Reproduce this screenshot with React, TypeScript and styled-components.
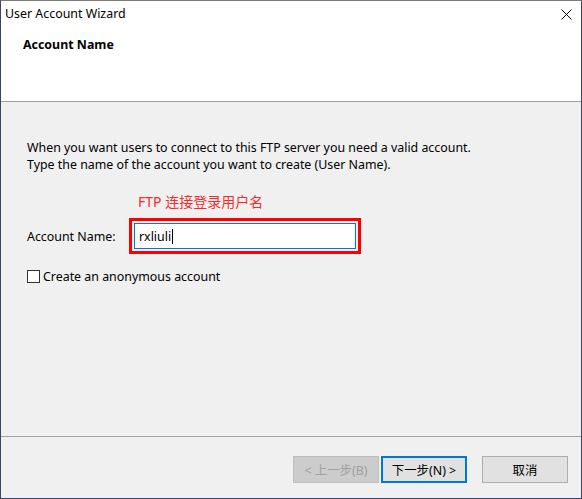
import React from "react";
import styled, { createGlobalStyle } from "styled-components";

const Global = createGlobalStyle`
  html, body { margin: 0; padding: 0; background: #f0f0f0; }
  body { font-family: "Segoe UI", "Noto Sans", "Noto Sans CJK SC", sans-serif; }
`;

const Window = styled.div`
  width: 582px;
  height: 499px;
  box-sizing: border-box;
  border: 1px solid #3a4466;
  border-top-color: #7a7a7a;
  background: #f0f0f0;
  display: flex;
  flex-direction: column;
  font-size: 12.4px;
  color: #000;
`;

const Header = styled.div`
  background: #fff;
  height: 101px;
  box-sizing: border-box;
  border-bottom: 1px solid #a0a0a0;
  display: flex;
  flex-direction: column;
`;

const TitleBar = styled.div`
  height: 24px;
  display: flex;
  align-items: center;
  justify-content: space-between;
  padding: 0 9px 0 4px;
`;

const Title = styled.span`
  font-size: 12.4px;
`;

const CloseIcon = styled.svg`
  width: 11px;
  height: 11px;
  margin-top: 2px;
`;

const PageTitle = styled.div`
  font-weight: bold;
  font-size: 12.4px;
  padding: 11px 0 0 22px;
`;

const Body = styled.div`
  flex: 1;
  display: flex;
  flex-direction: column;
  padding: 37px 0 0 26px;
`;

const Paragraph = styled.p`
  margin: 0;
  line-height: 17px;
`;

const Annotation = styled.div`
  color: #f52b2b;
  font-size: 14px;
  margin: 19px 0 0 111px;
  line-height: 19px;
`;

const FieldRow = styled.div`
  display: flex;
  align-items: center;
  margin-top: 7px;
`;

const Label = styled.span`
  width: 102px;
`;

const Highlight = styled.div`
  width: 232px;
  height: 36px;
  box-sizing: border-box;
  border: 3px solid #ff0000;
  padding: 2px;
`;

const TextBox = styled.div`
  height: 26px;
  box-sizing: border-box;
  border: 1px solid #0078d7;
  background: #fff;
  display: flex;
  align-items: center;
  padding-left: 4px;
`;

const Caret = styled.span`
  display: inline-block;
  width: 1px;
  height: 15px;
  background: #000;
  margin-left: 1px;
`;

const CheckRow = styled.label`
  display: flex;
  align-items: center;
  margin-top: 14px;
  gap: 3px;
`;

const Box = styled.span`
  width: 13px;
  height: 13px;
  box-sizing: border-box;
  border: 1px solid #333;
  background: #fff;
`;

const Footer = styled.div`
  height: 62px;
  box-sizing: border-box;
  border-top: 1px solid #a0a0a0;
  display: flex;
  justify-content: flex-end;
  align-items: flex-start;
  padding: 19px 13px 0 0;
`;

const Button = styled.div<{ $variant?: "disabled" | "default" | "normal" }>`
  width: 86px;
  height: 27px;
  box-sizing: border-box;
  display: flex;
  align-items: center;
  justify-content: center;
  font-size: 12.4px;
  background: ${(p) => (p.$variant === "disabled" ? "#cccccc" : "#e1e1e1")};
  color: ${(p) => (p.$variant === "disabled" ? "#a0a0a0" : "#000")};
  border: ${(p) =>
    p.$variant === "default"
      ? "2px solid #0078d7"
      : p.$variant === "disabled"
      ? "1px solid #bfbfbf"
      : "1px solid #adadad"};
  margin-left: ${(p) => (p.$variant === "normal" ? "15px" : "2px")};
`;

export default function App() {
  return (
    <>
      <Global />
      <Window>
        <Header>
          <TitleBar>
            <Title>User Account Wizard</Title>
            <CloseIcon viewBox="0 0 11 11">
              <path d="M0.5 0.5 L10.5 10.5 M10.5 0.5 L0.5 10.5" stroke="#000" strokeWidth="1" />
            </CloseIcon>
          </TitleBar>
          <PageTitle>Account Name</PageTitle>
        </Header>
        <Body>
          <Paragraph>
            When you want users to connect to this FTP server you need a valid account.
            <br />
            Type the name of the account you want to create (User Name).
          </Paragraph>
          <Annotation>FTP 连接登录用户名</Annotation>
          <FieldRow>
            <Label>Account Name:</Label>
            <Highlight>
              <TextBox>
                rxliuli
                <Caret />
              </TextBox>
            </Highlight>
          </FieldRow>
          <CheckRow>
            <Box />
            Create an anonymous account
          </CheckRow>
        </Body>
        <Footer>
          <Button $variant="disabled">&lt; 上一步(B)</Button>
          <Button $variant="default">下一步(N) &gt;</Button>
          <Button $variant="normal">取消</Button>
        </Footer>
      </Window>
    </>
  );
}
